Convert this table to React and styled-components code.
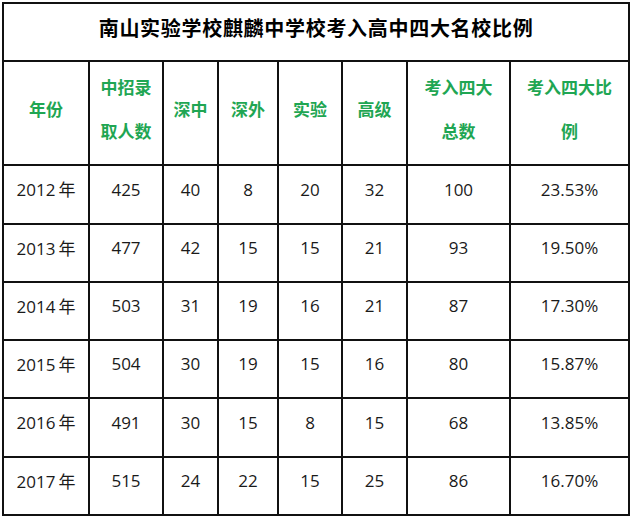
import React from "react";
import styled, { createGlobalStyle } from "styled-components";

const Global = createGlobalStyle`
  html, body { margin: 0; padding: 0; background: #fff; }
  body { font-family: "Open Sans", "Noto Sans CJK SC", sans-serif; }
`;

const Page = styled.div`
  padding: 2px 0 0 2px;
`;

const Table = styled.table`
  border-collapse: collapse;
  table-layout: fixed;
  width: 626px;
  color: #1a1a1a;
`;

const Cell = styled.td`
  border: 2px solid #111;
  text-align: center;
  padding: 0 0 ${(p) => p.$pb || 10}px 0;
  height: ${(p) => p.$h}px;
  box-sizing: border-box;
  font-size: 17px;
  line-height: 24px;
`;

const TitleCell = styled(Cell)`
  font-family: "Noto Sans CJK SC", sans-serif;
  font-weight: 700;
  font-size: 20px;
  color: #000;
  letter-spacing: 0.7px;
  padding-bottom: 8px;
`;

const HeadCell = styled(Cell)`
  font-family: "Noto Sans CJK SC", sans-serif;
  font-weight: 700;
  font-size: 17px;
  line-height: 44px;
  color: #1fa653;
  padding-bottom: 8px;
`;

const Unit = styled.span`
  font-family: "Noto Sans CJK SC", sans-serif;
  margin-left: 3px;
`;

const widths = [86, 74, 55, 60, 64, 65, 103, 119];

const headers = [
  ["年份"],
  ["中招录", "取人数"],
  ["深中"],
  ["深外"],
  ["实验"],
  ["高级"],
  ["考入四大", "总数"],
  ["考入四大比", "例"],
];

const rows = [
  ["2012", 425, 40, 8, 20, 32, 100, "23.53%"],
  ["2013", 477, 42, 15, 15, 21, 93, "19.50%"],
  ["2014", 503, 31, 19, 16, 21, 87, "17.30%"],
  ["2015", 504, 30, 19, 15, 16, 80, "15.87%"],
  ["2016", 491, 30, 15, 8, 15, 68, "13.85%"],
  ["2017", 515, 24, 22, 15, 25, 86, "16.70%"],
];

const rowHeights = [59, 58, 58, 58, 59, 58];

export default function App() {
  return (
    <>
      <Global />
      <Page>
        <Table>
          <colgroup>
            {widths.map((w, i) => (
              <col key={i} style={{ width: w }} />
            ))}
          </colgroup>
          <tbody>
            <tr>
              <TitleCell colSpan={8} $h={58}>
                南山实验学校麒麟中学校考入高中四大名校比例
              </TitleCell>
            </tr>
            <tr>
              {headers.map((h, i) => (
                <HeadCell key={i} $h={104}>
                  {h.map((line, j) => (
                    <React.Fragment key={j}>
                      {j > 0 && <br />}
                      {line}
                    </React.Fragment>
                  ))}
                </HeadCell>
              ))}
            </tr>
            {rows.map((r, i) => (
              <tr key={i}>
                {r.map((v, j) => (
                  <Cell key={j} $h={rowHeights[i]}>
                    {v}
                    {j === 0 && <Unit>年</Unit>}
                  </Cell>
                ))}
              </tr>
            ))}
          </tbody>
        </Table>
      </Page>
    </>
  );
}
